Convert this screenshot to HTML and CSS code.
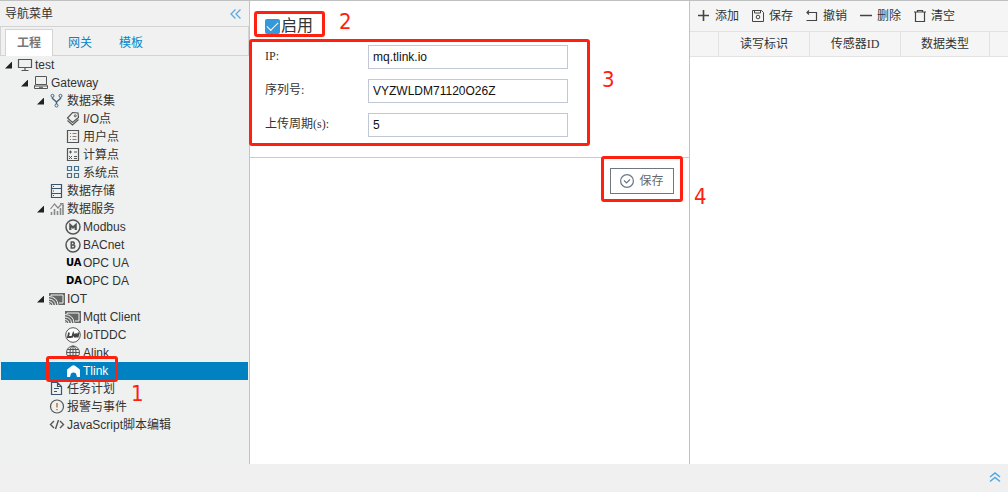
FILE: index.html
```html
<!DOCTYPE html>
<html lang="zh-CN">
<head>
<meta charset="utf-8">
<title>Gateway</title>
<link rel="stylesheet" href="styles.css">
</head>
<body>
<div class="workspace">
  <aside class="sidebar">
    <header class="sidebar-head">
      <span>导航菜单</span>
      <button class="plain" aria-label="收起"><svg width="12" height="14" viewBox="0 0 12 14" fill="none" stroke="#5fade3" stroke-width="1.4"><path d="M5.500 2.500L1 7l4.500 4.500M10.500 2.500L6 7l4.500 4.500"/></svg></button>
    </header>
    <nav class="tabs">
      <button class="tab active">工程</button>
      <button class="tab">网关</button>
      <button class="tab">模板</button>
    </nav>
    <ul class="tree">
      <li class="node l0"><i class="arrow"></i><svg class="icon" viewBox="0 0 16 16"><path d="M1.500 2.500h13v8h-13zM8 10.500v3M4.500 13.500h7" stroke-width="1.200"/></svg><span>test</span></li>
      <li class="node l1"><i class="arrow"></i><svg class="icon" viewBox="0 0 16 16"><path d="M2.500 1.500h11v8h-11zM2.500 9.500l-1 1.500v2.500h13V11l-1-1.500M1.500 11h13M6 12.300h4"/></svg><span>Gateway</span></li>
      <li class="node l2"><i class="arrow"></i><svg class="icon" viewBox="0 0 16 16"><g stroke="#47647c"><circle cx="3.500" cy="2.800" r="1.500"/><circle cx="11.500" cy="2.800" r="1.500"/><circle cx="7.500" cy="12.500" r="1.500"/><path d="M3.500 4.300v1.200l4 3.500 4-3.500V4.300M7.500 9v2" stroke-width="1.500"/></g></svg><span>数据采集</span></li>
      <li class="node l3"><i class="arrow none"></i><svg class="icon" viewBox="0 0 16 16"><path d="M7.500 1.500l5.500.500.500 4.500-6 5L2.500 7zM2.500 9.500l5 4.500 6-5.500" stroke-width="1.200"/><circle cx="10.300" cy="4.800" r="1"/></svg><span>I/O点</span></li>
      <li class="node l3"><i class="arrow none"></i><svg class="icon" viewBox="0 0 16 16"><path d="M2.500 1.500h11v12h-11z" stroke-width="1.200"/><path stroke="#8a7a6c" d="M5 4.500h1M5 7.500h1M5 10.500h1M7.500 4.500h4M7.500 7.500h4M7.500 10.500h4"/></svg><span>用户点</span></li>
      <li class="node l3"><i class="arrow none"></i><svg class="icon" viewBox="0 0 16 16"><path d="M2.500 1.500h11v12h-11z" stroke-width="1.200"/><path d="M4 5h3M5.500 3.500v3M9 5h3M4 9l3 3M7 9l-3 3M9 9.500h3M9 11.500h3"/></svg><span>计算点</span></li>
      <li class="node l3"><i class="arrow none"></i><svg class="icon" viewBox="0 0 16 16"><path stroke="#47708c" stroke-width="1.200" d="M2.500 1.500h4v4h-4zM9.500 1.500h4v4h-4zM2.500 8.500h4v4h-4zM9.500 8.500h4v4h-4z"/></svg><span>系统点</span></li>
      <li class="node l2"><i class="arrow none"></i><svg class="icon" viewBox="0 0 16 16"><path stroke="#3b5468" stroke-width="1.200" d="M2.500 1.500h10v13h-10zM2.500 5.500h10M2.500 10.500h10M4 3.500h1M4 8h1M4 12.500h1"/></svg><span>数据存储</span></li>
      <li class="node l2"><i class="arrow"></i><svg class="icon" viewBox="0 0 16 16"><g stroke="#888"><path d="M2.500 14v-3M5.500 14V8M8.500 14v-4M11.500 14V7M14 14V4" stroke-width="1.600"/><path d="M1.500 8l4-5 3.500 4 4-4.500M11 2.500h3V5" stroke-width="1.200"/></g></svg><span>数据服务</span></li>
      <li class="node l3"><i class="arrow none"></i><svg class="icon" viewBox="0 0 16 16"><circle cx="8" cy="8" r="7" stroke-width="1.500"/><path d="M5.300 11V6L8 8.500 10.700 6v5" stroke-width="2.200"/></svg><span>Modbus</span></li>
      <li class="node l3"><i class="arrow none"></i><svg class="icon" viewBox="0 0 16 16"><circle cx="8" cy="8" r="7" stroke-width="1.500"/><path d="M6.300 5h2q2 1.500 0 3h-2zM6.300 8h2.500q2 1.500 0 3H6.300z" stroke-width="1.600"/></svg><span>BACnet</span></li>
      <li class="node l3"><i class="arrow none"></i><b class="mark">UA</b><span>OPC UA</span></li>
      <li class="node l3"><i class="arrow none"></i><b class="mark">DA</b><span>OPC DA</span></li>
      <li class="node l2"><i class="arrow"></i><svg class="icon" viewBox="0 0 16 16"><path d="M0 2h16v12H0z" fill="#666" stroke="none"/><path d="M2 5V4h12v8h-4" stroke="#eff1f1"/><path d="M0 5.500Q8.500 6 9 14M0 8q6 .500 6.500 6M0 10.500q3.500 0 4 3.500M0 12.800q1.500 0 1.500 1.200" stroke="#eff1f1"/></svg><span>IOT</span></li>
      <li class="node l3"><i class="arrow none"></i><svg class="icon" viewBox="0 0 16 16"><path d="M0 2h16v12H0z" fill="#666" stroke="none"/><path d="M2 5V4h12v8h-4" stroke="#eff1f1"/><path d="M0 5.500Q8.500 6 9 14M0 8q6 .500 6.500 6M0 10.500q3.500 0 4 3.500M0 12.800q1.500 0 1.500 1.200" stroke="#eff1f1"/></svg><span>Mqtt Client</span></li>
      <li class="node l3"><i class="arrow none"></i><svg class="icon" viewBox="0 0 16 16"><circle cx="8" cy="8" r="7.300" fill="#fff"/><path d="M4 5.500L3 10h3.500M7 10.500l1.300-4 1.200 2.500 2-2.500-1 4M10.500 8.500h2M13.700 5.500l-1.200 5" stroke-width="1.800" stroke="#444"/></svg><span>IoTDDC</span></li>
      <li class="node l3"><i class="arrow none"></i><svg class="icon" viewBox="0 0 16 16"><circle cx="8" cy="7.500" r="6.500"/><ellipse cx="8" cy="7.500" rx="3" ry="6.500"/><path d="M8 1v13M1.500 7.500h13M2.500 4.500h11M2.500 10.500h11"/></svg><span>Alink</span></li>
      <li class="node l3 selected"><i class="arrow none"></i><svg class="icon" viewBox="0 0 16 16"><path d="M2 14V7.500q0-1 1-1.700l4-3q1.500-1 3 0l4 3q1 .700 1 1.700V14h-3l-1-3.500q-2.500-2-5 0L5 14z" fill="#fff" stroke="none"/></svg><span>Tlink</span></li>
      <li class="node l2"><i class="arrow none"></i><svg class="icon" viewBox="0 0 16 16"><path stroke="#3b5468" stroke-width="1.200" d="M2.500 1.500h6l4 4v8h-10zM8.500 1.500v4h4M5 7.500h5M5 10.500h3"/></svg><span>任务计划</span></li>
      <li class="node l2"><i class="arrow none"></i><svg class="icon" viewBox="0 0 16 16"><circle cx="8" cy="7.500" r="6.500" stroke-width="1.200"/><path d="M8 4v4.500M8 10v1.300" stroke="#b3641f" stroke-width="1.300"/></svg><span>报警与事件</span></li>
      <li class="node l2"><i class="arrow none"></i><svg class="icon" viewBox="0 0 16 16"><path d="M5 4L1.500 7.500 5 11M11 4l3.500 3.500L11 11M9.500 3l-3 9" stroke-width="1.400"/></svg><span>JavaScript脚本编辑</span></li>
    </ul>
    <div class="callout box-one"></div><span class="callout-num num-one">1</span>
  </aside>

  <main class="settings">
    <form class="form">
      <label class="enable"><input type="checkbox" checked>启用</label>
      <div class="field"><label for="ip">IP:</label><input id="ip" type="text" value="mq.tlink.io"></div>
      <div class="field"><label for="serial">序列号:</label><input id="serial" type="text" value="VYZWLDM71120O26Z"></div>
      <div class="field"><label for="period">上传周期(s):</label><input id="period" type="text" value="5"></div>
    </form>
    <div class="actions">
      <button class="save"><svg width="14" height="14" viewBox="0 0 14 14" fill="none" stroke="#6a7886" stroke-width="1.200"><circle cx="7" cy="7" r="6.400"/><path d="M4 6.500L6.500 9 10 5.500"/></svg>保存</button>
    </div>
    <div class="callout box-two"></div><span class="callout-num num-two">2</span>
    <div class="callout box-three"></div><span class="callout-num num-three">3</span>
    <div class="callout box-four"></div><span class="callout-num num-four">4</span>
  </main>

  <section class="points">
    <div class="toolbar">
      <button class="tool"><svg class="glyph" viewBox="0 0 14 14"><path d="M6.500 1v11M1 6.500h11" stroke-width="1.600"/></svg>添加</button>
      <button class="tool"><svg class="glyph" viewBox="0 0 14 14"><path d="M1.500 1.500h9l2 2v9h-11zM3.500 1.500v2.500h6V1.500"/><circle cx="7" cy="8" r="1.800"/></svg>保存</button>
      <button class="tool"><svg class="glyph" viewBox="0 0 14 14"><path d="M2 3.500h9.500v8H1.500M4 1.500l-2 2 2 2" stroke-width="1.200"/></svg>撤销</button>
      <button class="tool"><svg class="glyph" viewBox="0 0 14 14"><path d="M1 6.500h12" stroke-width="1.500"/></svg>删除</button>
      <button class="tool"><svg class="glyph" viewBox="0 0 14 14"><path d="M1 3h12M4.500 3V1.500h5V3M2.500 3v9.500h9V3" stroke-width="1.200"/></svg>清空</button>
    </div>
    <table class="grid">
      <colgroup><col class="c-index"><col class="c-data"><col class="c-data"><col class="c-type"><col></colgroup>
      <thead><tr><th></th><th>读写标识</th><th>传感器<span class="roman">ID</span></th><th>数据类型</th><th></th></tr></thead>
    </table>
  </section>
</div>
<footer class="statusbar">
  <button class="plain" aria-label="展开"><svg width="12" height="12" viewBox="0 0 12 12" fill="none" stroke="#4ea6e3" stroke-width="1.500"><path d="M1 5l5-4 5 4M1 9.500l5-4 5 4"/></svg></button>
</footer>
</body>
</html>
```

FILE: styles.css
```css
* { box-sizing: border-box; }

body {
  margin: 0;
  min-height: 100vh;
  display: flex;
  flex-direction: column;
  border-top: 1px solid #bfc1c1;
  background: #fff;
  color: #333;
  font: 12px/18px "Liberation Sans", "Noto Sans CJK SC", sans-serif;
}

button {
  margin: 0;
  padding: 0;
  border: 0;
  background: none;
  color: inherit;
  font: inherit;
}

svg { display: block; flex: none; }

.workspace {
  flex: 1;
  display: grid;
  grid-template-columns: 250px 440px minmax(0, 1fr);
}

.sidebar {
  position: relative;
  border-right: 1px solid #c0c4c4;
  background: #eff1f1;
}

.sidebar-head {
  display: flex;
  align-items: center;
  justify-content: space-between;
  height: 26px;
  padding: 0 7px 0 5px;
  border-bottom: 1px solid #d3d3d3;
  background: #f1f1f1;
}

.tabs {
  display: flex;
  gap: 3px;
  height: 29px;
  padding: 2px 4px 0;
  border: 1px solid #d3d3d3;
  border-top: 0;
  background: #f1f1f1;
}

.tab {
  width: 48px;
  height: 27px;
  color: #0088cc;
}

.tab.active {
  border: 1px solid #d3d3d3;
  border-bottom: 0;
  background: #fff;
  color: #777;
  font-weight: 700;
}

.tree {
  margin: 0;
  padding: 0 1px;
  list-style: none;
}

.node {
  display: flex;
  align-items: center;
  height: 18px;
  white-space: nowrap;
}

.l1 { padding-left: 16px; }
.l2 { padding-left: 32px; }
.l3 { padding-left: 48px; }

.selected {
  background: #0081c2;
  color: #fff;
}

.arrow {
  flex: none;
  width: 7px;
  height: 7px;
  margin: 0 5px 0 4px;
  background: #222;
  clip-path: polygon(100% 0, 100% 100%, 0 100%);
}

.arrow.none { visibility: hidden; }

.icon {
  width: 16px;
  height: 16px;
  margin-right: 2px;
  fill: none;
  stroke: #555;
}

.mark {
  width: 17px;
  margin-right: 1px;
  padding-left: 1px;
  color: #000;
  font: 700 10px/16px "DejaVu Sans", sans-serif;
}

.settings {
  position: relative;
  border-right: 1px solid #c0c4c4;
}

.form {
  display: flex;
  flex-direction: column;
  gap: 10px;
  padding: 16px 15px 20px;
  border-bottom: 1px solid #ccc;
}

.enable {
  display: flex;
  align-items: center;
  height: 18px;
  font-size: 16px;
}

.enable input {
  appearance: none;
  width: 15px;
  height: 15px;
  margin: 0 1px 0 0;
  border-radius: 2px;
  background: #3498db;
  display: grid;
  place-items: center;
}

.enable input::after {
  content: "";
  width: 10px;
  height: 5px;
  margin-bottom: 3px;
  border: solid #fff;
  border-width: 0 0 1px 1px;
  transform: rotate(-45deg);
}

.field {
  display: grid;
  grid-template-columns: 103px 200px;
  height: 24px;
}

.field label {
  line-height: 23px;
  font-family: "Liberation Serif", "Noto Sans CJK SC", serif;
}

.field input {
  width: 100%;
  height: 24px;
  padding: 0 4px;
  border: 1px solid #c0c8d5;
  border-radius: 0;
  background: #fff;
  color: #111;
  font: 12px/22px "Liberation Sans", sans-serif;
}

.actions {
  display: flex;
  justify-content: flex-end;
  padding: 10px 15px;
}

.save {
  display: flex;
  align-items: center;
  justify-content: center;
  gap: 5px;
  width: 64px;
  height: 26px;
  border: 1px solid #6f7780;
  background: #fff;
  color: #606a75;
}

.points { overflow: hidden; }

.toolbar {
  display: flex;
  gap: 12px;
  height: 31px;
  padding: 0 7px;
  border-bottom: 1px solid #e2e2e2;
  background: #f5f5f5;
}

.tool {
  display: flex;
  align-items: center;
  gap: 4px;
  white-space: nowrap;
}

.glyph {
  width: 14px;
  height: 14px;
  fill: none;
  stroke: #444;
}

.grid {
  width: 100%;
  table-layout: fixed;
  border-collapse: separate;
  border-spacing: 0;
  background: #f5f5f5;
}

.c-index { width: 29px; }
.c-data { width: 91px; }
.c-type { width: 89px; }

.grid th {
  height: 25px;
  padding: 0;
  border: solid #e2e2e2;
  border-width: 0 1px 1px 0;
  font-weight: 400;
}

.grid th:last-child { border-right: 0; }

.roman { font-family: "Liberation Serif", serif; }

.statusbar {
  display: flex;
  align-items: center;
  justify-content: flex-end;
  height: 28px;
  padding: 0 7px;
  background: #f0f0f0;
}

.callout {
  position: absolute;
  border: 3px solid #ff2010;
  border-radius: 3px;
  pointer-events: none;
}

.callout-num {
  position: absolute;
  color: #ff2010;
  font: 22px/24px "DejaVu Sans Condensed", "DejaVu Sans", sans-serif;
}

.box-one { left: 46px; top: 355px; width: 72px; height: 26px; }
.num-one { left: 131px; top: 381px; }
.box-two { left: 4px; top: 10px; width: 71px; height: 26px; }
.num-two { left: 89px; top: 9px; }
.box-three { left: -1px; top: 38px; width: 341px; height: 107px; }
.num-three { left: 352px; top: 67px; }
.box-four { left: 351px; top: 155px; width: 82px; height: 46px; }
.num-four { left: 444px; top: 184px; }
```
